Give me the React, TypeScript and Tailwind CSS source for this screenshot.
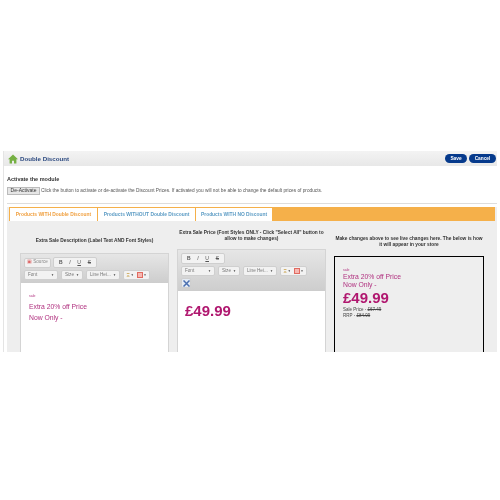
const ink = "text-[#b0176f]";

function Btn({ label, wide }: { label: string; wide?: boolean }) {
  return (
    <span
      className={`flex h-[10px] items-center justify-between whitespace-nowrap rounded-[2px] border border-[#cfcfcf] bg-[#f2f2f2] px-[3px] text-[4.6px] text-[#777] ${wide ? "w-[34px]" : "w-[22px]"}`}
    >
      {label}
      <span className="text-[3px] leading-none text-[#444]">▼</span>
    </span>
  );
}

function StyleRow() {
  return (
    <div className="flex items-center gap-[3px]">
      <Btn label="Font" wide />
      <Btn label="Size" />
      <Btn label="Line Hei..." wide />
      <span className="flex h-[10px] w-[27px] items-center justify-center gap-[1px] rounded-[2px] border border-[#cfcfcf] bg-[#f2f2f2]">
        <span className="text-[5px] font-bold leading-none text-[#c9a24a]">Ξ</span>
        <span className="text-[3px] leading-none text-[#444]">▼</span>
        <span className="ml-[2px] h-[6px] w-[6px] border border-[#e06a60] bg-[#f7b8b2]" />
        <span className="text-[3px] leading-none text-[#444]">▼</span>
      </span>
    </div>
  );
}

function FormatGroup() {
  return (
    <div className="flex h-[11px] w-[44px] items-center justify-between rounded-[2px] border border-[#cfcfcf] bg-[#f2f2f2] px-[5px] text-[5px] text-[#555]">
      <span className="font-bold">B</span>
      <span className="italic">I</span>
      <span className="underline">U</span>
      <span className="line-through">S</span>
    </div>
  );
}

export default function App() {
  return (
    <div className="h-[500px] w-[500px] overflow-hidden bg-white pt-[151px] font-['Liberation_Sans',sans-serif] blur-[0.3px]">
      <div className="ml-[3px] h-[201px] w-[494px] border-l border-[#e4e4e4]">
        <div className="flex h-[15px] items-center justify-between bg-gradient-to-b from-[#f3f3f3] to-[#e8e8e8] pl-[4px] pr-[1px]">
          <div className="flex items-center gap-[2px]">
            <svg width="10" height="10" viewBox="0 0 10 10">
              <path d="M5 .5 10 5.200H8.400V9.500H6V6.800H4V9.500H1.600V5.200H0z" fill="#76b043" />
            </svg>
            <span className="text-[6.2px] font-bold text-[#2d4a80]">Double Discount</span>
          </div>
          <div className="flex gap-[2px]">
            <span className="flex h-[9px] w-[22px] items-center justify-center rounded-full bg-[#063a8c] text-[4.8px] font-bold text-white">Save</span>
            <span className="flex h-[9px] w-[27px] items-center justify-center rounded-full bg-[#063a8c] text-[4.8px] font-bold text-white">Cancel</span>
          </div>
        </div>

        <div className="pl-[3px]">
          <p className="mt-[10px] text-[5.5px] font-bold leading-[7px] text-[#333]">Activate the module</p>
          <div className="mt-[4px] flex items-center gap-[1px]">
            <span className="flex h-[8px] w-[33px] items-center justify-center border border-[#bbb] bg-[#e6e6e6] text-[5px] text-[#333]">De-Activate</span>
            <span className="text-[4.75px] text-[#555]">
              Click the button to activate or de-activate the Discount Prices. If activated you will not be able to change the default prices of products.
            </span>
          </div>
          <div className="mt-[8px] h-[1px] bg-[#ddd]" />
          <div className="mt-[3px] bg-[#eeeeee]">
            <div className="mx-[2px] flex h-[14px] items-end bg-[#f5b04a] pl-[1px]">
              <span className="flex h-[13px] w-[87px] items-center justify-center bg-white text-[4.9px] font-bold text-[#f0a040]">Products WITH Double Discount</span>
              <span className="ml-[1px] flex h-[13px] w-[97px] items-center justify-center bg-white text-[4.9px] font-bold text-[#5b9bc4]">Products WITHOUT Double Discount</span>
              <span className="ml-[1px] flex h-[13px] w-[76px] items-center justify-center bg-white text-[4.9px] font-bold text-[#5b9bc4]">Products WITH NO Discount</span>
            </div>
            <div className="flex h-[131px] gap-[8px] overflow-hidden pl-[13px]">
              <div className="w-[149px] shrink-0">
                <p className="mt-[17px] text-center text-[4.8px] font-bold leading-[6px] text-[#333]">Extra Sale Description (Label Text AND Font Styles)</p>
                <div className="mt-[9px] border-x border-t border-[#d4d4d4]">
                  <div className="flex h-[29px] flex-col gap-[2px] bg-gradient-to-b from-[#e6e6e6] to-[#cdcdcd] px-[3px] pt-[3px]">
                    <div className="flex items-center gap-[2px]">
                      <span className="flex h-[10px] w-[27px] items-center justify-center rounded-[2px] border border-[#cfcfcf] bg-[#f2f2f2] text-[4.6px] text-[#888]">
                        <span className="mr-[1px] text-[#d66]">▣</span>Source
                      </span>
                      <FormatGroup />
                    </div>
                    <StyleRow />
                  </div>
                  <div className="h-[70px] bg-white pl-[8px] pt-[11px] text-[#b0307f]">
                    <p className="text-[3.5px] leading-[5px]">sale</p>
                    <p className="mt-[2px] text-[6.8px] leading-[11px]">Extra 20% off Price</p>
                    <p className="text-[6.8px] leading-[11px]">Now Only -</p>
                  </div>
                </div>
              </div>
              <div className="w-[149px] shrink-0">
                <p className="mt-[9px] text-center text-[4.8px] font-bold leading-[6px] text-[#333]">
                  Extra Sale Price (Font Styles ONLY - Click "Select All" button to allow to make changes)
                </p>
                <div className="mt-[7px] border-x border-t border-[#d4d4d4]">
                  <div className="flex h-[41px] flex-col gap-[2px] bg-gradient-to-b from-[#e6e6e6] to-[#cdcdcd] px-[3px] pt-[3px]">
                    <FormatGroup />
                    <StyleRow />
                    <span className="flex h-[10px] w-[10px] items-center justify-center rounded-[2px] border border-[#cfcfcf] bg-[#e4ebf4]">
                      <svg width="7" height="7" viewBox="0 0 7 7">
                        <path d="M.5.500 6.500 6.500M6.500.500.500 6.500" stroke="#4a6fb0" strokeWidth="1.500" />
                      </svg>
                    </span>
                  </div>
                  <div className={`h-[70px] bg-white pl-[7px] pt-[11px] text-[15px] font-bold leading-[18px] ${ink}`}>£49.99</div>
                </div>
              </div>
              <div className="w-[150px] shrink-0">
                <p className="mt-[15px] text-center text-[4.8px] font-bold leading-[6px] text-[#333]">
                  Make changes above to see live changes here. The below is how it will appear in your store
                </p>
                <div className={`mt-[8px] h-[110px] border border-black pl-[8px] pt-[11px] ${ink}`}>
                  <p className="text-[3.5px] leading-[5px] text-[#b0307f]">sale</p>
                  <p className="text-[6.8px] leading-[8px] text-[#b0307f]">Extra 20% off Price</p>
                  <p className="text-[6.8px] leading-[8px] text-[#b0307f]">Now Only -</p>
                  <p className="text-[15px] font-bold leading-[18px]">£49.99</p>
                  <p className="text-[4.5px] leading-[6px] text-[#444]">Sale Price - <span className="line-through">£67.49</span></p>
                  <p className="text-[4.5px] leading-[5px] text-[#444]">RRP - <span className="line-through">£84.99</span></p>
                </div>
              </div>
            </div>
          </div>
        </div>
      </div>
    </div>
  );
}
